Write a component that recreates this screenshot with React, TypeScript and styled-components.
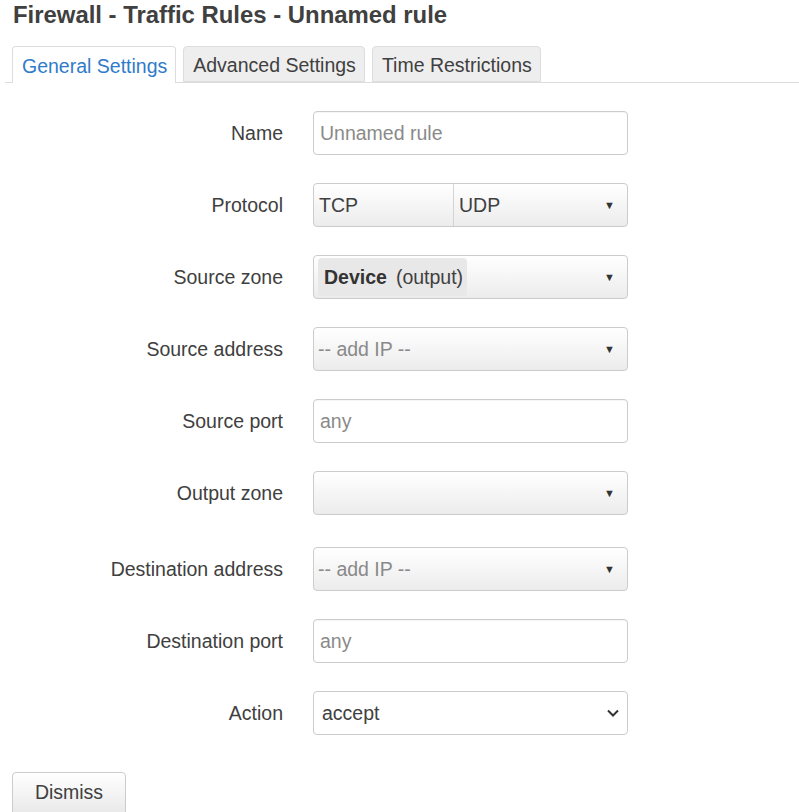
import React from "react";
import styled, { createGlobalStyle } from "styled-components";

const Global = createGlobalStyle`
  html, body { margin: 0; padding: 0; background: #fff; }
  body { font-family: "Liberation Sans", Arial, sans-serif; color: #404040; }
  * { box-sizing: border-box; }
`;

const Page = styled.div`
  width: 799px;
  height: 812px;
  overflow: hidden;
  padding: 0 0 0 5px;
`;

const Title = styled.h2`
  margin: 0;
  padding: 2px 0 0 8px;
  height: 46px;
  font-size: 23.9px;
  font-weight: bold;
  color: #404040;
  line-height: 26px;
`;

const Tabs = styled.ul`
  display: flex;
  gap: 7px;
  margin: 0;
  padding: 0 0 0 7px;
  list-style: none;
  border-bottom: 1px solid #ddd;
  height: 37px;
`;

const Tab = styled.li<{ $active?: boolean }>`
  height: ${(p) => (p.$active ? "37px" : "36px")};
  padding: 2px 8px 0 9px;
  display: flex;
  align-items: center;
  font-size: 19.5px;
  border: 1px solid #ddd;
  border-bottom: ${(p) => (p.$active ? "none" : "1px solid #ddd")};
  border-radius: 4px 4px 0 0;
  background: ${(p) => (p.$active ? "#fff" : "#eee")};
  color: ${(p) => (p.$active ? "#2f7bc9" : "#404040")};
`;

const Form = styled.div`
  display: flex;
  flex-direction: column;
  gap: 28px;
  padding-top: 28px;
`;

const Row = styled.div<{ $extra?: number }>`
  display: grid;
  grid-template-columns: 278px 315px;
  column-gap: 30px;
  align-items: center;
  margin-top: ${(p) => p.$extra ?? 0}px;
`;

const Label = styled.label`
  text-align: right;
  font-size: 19.5px;
  color: #404040;
`;

const TextInput = styled.input`
  height: 44px;
  width: 315px;
  border: 1px solid #ccc;
  border-radius: 4px;
  padding: 0 6px;
  font-family: inherit;
  font-size: 19.5px;
  color: #404040;
  background: #fff;
  box-shadow: inset 0 1px 1px rgba(0, 0, 0, 0.04);
  &::placeholder { color: #8a8a8a; }
  outline: none;
`;

const Dropdown = styled.div`
  height: 44px;
  width: 315px;
  border: 1px solid #ccc;
  border-radius: 4px;
  background: linear-gradient(#fff, #ececec);
  display: flex;
  align-items: center;
  position: relative;
  font-size: 19.5px;
  color: #404040;
  padding-right: 28px;
`;

const Arrow = styled.span`
  position: absolute;
  right: 12px;
  top: 50%;
  transform: translateY(-50%);
  font-size: 11px;
  color: #333;
`;

const Item = styled.span<{ $grow?: boolean; $sep?: boolean }>`
  padding: 0 5px;
  flex: ${(p) => (p.$grow ? "1" : "0 0 140px")};
  display: flex;
  align-items: center;
  border-right: ${(p) => (p.$sep ? "1px solid #d4d4d4" : "none")};
  height: ${(p) => (p.$sep ? "42px" : "auto")};
`;

const Placeholder = styled.span`
  color: #8a8a8a;
  padding-left: 4px;
`;

const Badge = styled.span`
  margin-left: 4px;
  background: #e8e8e8;
  border-radius: 4px;
  height: 38px;
  padding: 0 4px 0 6px;
  display: flex;
  align-items: center;
  gap: 9px;
  b { font-weight: bold; color: #333; }
`;

const Select = styled.select`
  height: 44px;
  width: 315px;
  border: 1px solid #ccc;
  border-radius: 4px;
  background: #fff;
  font-family: inherit;
  font-size: 19.5px;
  color: #404040;
  padding: 0 8px;
  appearance: none;
  outline: none;
`;

const SelectWrap = styled.div`
  position: relative;
  width: 315px;
  height: 44px;
`;

const Chevron = styled.svg`
  position: absolute;
  right: 8px;
  top: 16px;
  pointer-events: none;
`;

const Footer = styled.div`
  padding: 37px 0 0 7px;
`;

const Button = styled.button`
  height: 44px;
  width: 114px;
  border: 1px solid #ccc;
  border-radius: 4px;
  background: linear-gradient(#fff, #e8e8e8);
  font-family: inherit;
  font-size: 19.5px;
  color: #404040;
  padding: 0 0 4px;
`;

export default function App() {
  return (
    <Page>
      <Global />
      <Title>Firewall - Traffic Rules - Unnamed rule</Title>
      <Tabs>
        <Tab $active>General Settings</Tab>
        <Tab>Advanced Settings</Tab>
        <Tab>Time Restrictions</Tab>
      </Tabs>
      <Form>
        <Row>
          <Label>Name</Label>
          <TextInput placeholder="Unnamed rule" />
        </Row>
        <Row>
          <Label>Protocol</Label>
          <Dropdown>
            <Item $sep>TCP</Item>
            <Item $grow>UDP</Item>
            <Arrow>▼</Arrow>
          </Dropdown>
        </Row>
        <Row>
          <Label>Source zone</Label>
          <Dropdown>
            <Badge>
              <b>Device</b>
              <span>(output)</span>
            </Badge>
            <Arrow>▼</Arrow>
          </Dropdown>
        </Row>
        <Row>
          <Label>Source address</Label>
          <Dropdown>
            <Placeholder>-- add IP --</Placeholder>
            <Arrow>▼</Arrow>
          </Dropdown>
        </Row>
        <Row>
          <Label>Source port</Label>
          <TextInput placeholder="any" />
        </Row>
        <Row>
          <Label>Output zone</Label>
          <Dropdown>
            <Arrow>▼</Arrow>
          </Dropdown>
        </Row>
        <Row $extra={4}>
          <Label>Destination address</Label>
          <Dropdown>
            <Placeholder>-- add IP --</Placeholder>
            <Arrow>▼</Arrow>
          </Dropdown>
        </Row>
        <Row>
          <Label>Destination port</Label>
          <TextInput placeholder="any" />
        </Row>
        <Row>
          <Label>Action</Label>
          <SelectWrap>
            <Select defaultValue="accept">
              <option value="accept">accept</option>
              <option value="drop">drop</option>
              <option value="reject">reject</option>
            </Select>
            <Chevron width="14" height="12" viewBox="0 0 14 12">
              <path d="M2 3.5 L7 8.5 L12 3.5" fill="none" stroke="#333" strokeWidth="2" />
            </Chevron>
          </SelectWrap>
        </Row>
      </Form>
      <Footer>
        <Button>Dismiss</Button>
      </Footer>
    </Page>
  );
}
